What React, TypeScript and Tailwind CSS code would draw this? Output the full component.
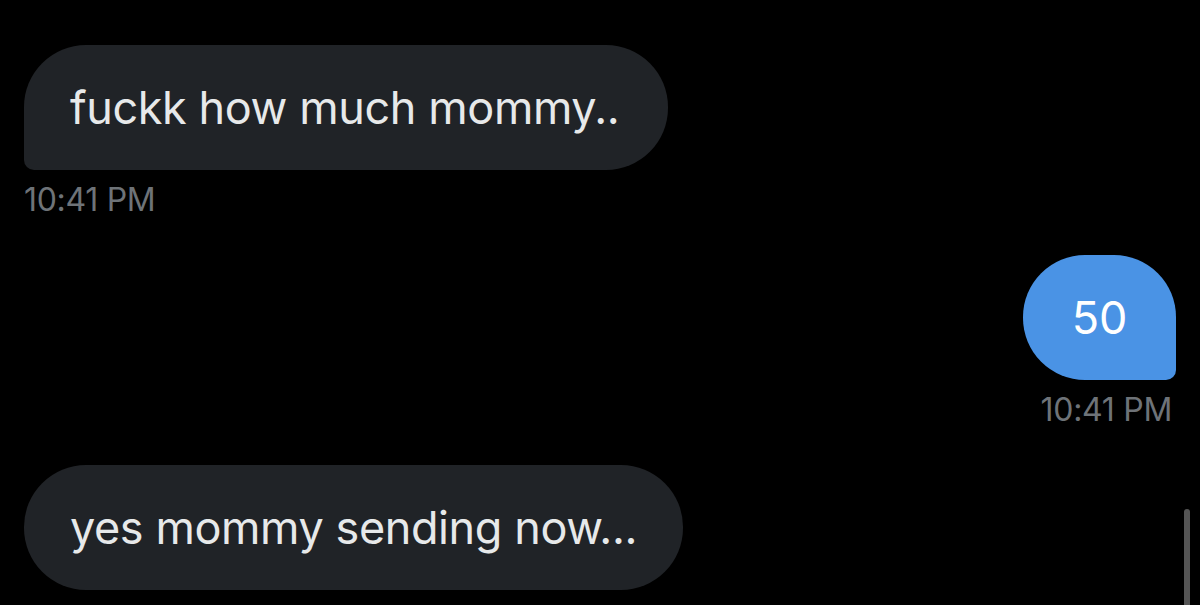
const Time = ({ right }: { right?: boolean }) => (
  <div className={`mt-[12px] text-[32px] leading-[36px] tracking-[-0.3px] text-[#6e7378] ${right ? "self-end pr-[4px]" : ""}`}>
    10:41 PM
  </div>
)

export default function App() {
  return (
    <div
      className="relative w-[1200px] h-[605px] overflow-hidden bg-black flex flex-col px-[24px] pt-[45px]"
      style={{ fontFamily: "Inter, 'Liberation Sans', sans-serif" }}
    >
      <div className="self-start h-[125px] w-[644px] flex items-center pl-[46px] bg-[#202327] rounded-t-[62px] rounded-br-[62px] rounded-bl-[10px] text-[45px] text-[#e7e9ea] tracking-[-0.4px]">
        fuckk how much mommy..
      </div>
      <Time />

      <div className="self-end mt-[37px] h-[125px] w-[153px] flex items-center justify-center bg-[#4a93e5] rounded-t-[62px] rounded-bl-[62px] rounded-br-[10px] text-[45px] text-white">
        50
      </div>
      <Time right />

      <div className="self-start mt-[37px] h-[125px] w-[659px] flex items-center pl-[46px] bg-[#202327] rounded-[62px] text-[45px] text-[#e7e9ea] tracking-[-0.4px]">
        yes mommy sending now...
      </div>

      <div className="absolute right-[10px] top-[509px] bottom-0 w-[6px] rounded-t-full bg-[#555]" />
    </div>
  )
}
